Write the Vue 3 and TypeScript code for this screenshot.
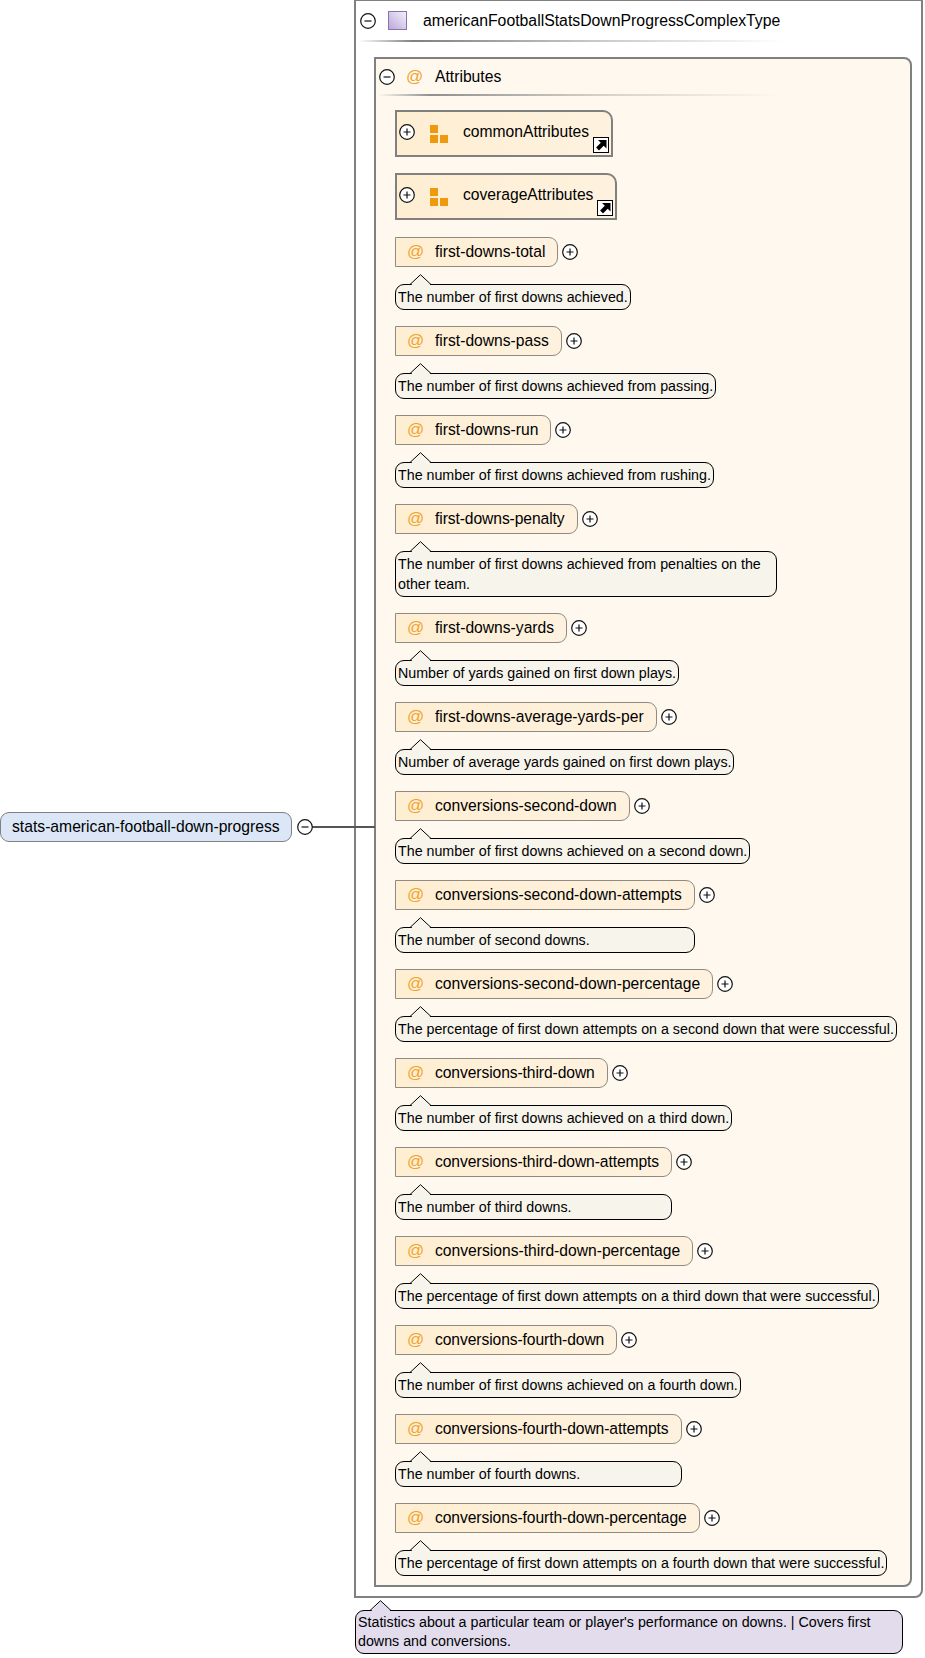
<script setup lang="ts">
interface Attr { name: string; tip: string; wide?: boolean; tight?: boolean }
const attrs: Attr[] = [
  { name: 'first-downs-total', tip: 'The number of first downs achieved.' },
  { name: 'first-downs-pass', tip: 'The number of first downs achieved from passing.' },
  { name: 'first-downs-run', tip: 'The number of first downs achieved from rushing.' },
  { name: 'first-downs-penalty', tip: 'The number of first downs achieved from penalties on the other team.', wide: true, tight: true },
  { name: 'first-downs-yards', tip: 'Number of yards gained on first down plays.' },
  { name: 'first-downs-average-yards-per', tip: 'Number of average yards gained on first down plays.' },
  { name: 'conversions-second-down', tip: 'The number of first downs achieved on a second down.' },
  { name: 'conversions-second-down-attempts', tip: 'The number of second downs.' },
  { name: 'conversions-second-down-percentage', tip: 'The percentage of first down attempts on a second down that were successful.' },
  { name: 'conversions-third-down', tip: 'The number of first downs achieved on a third down.', tight: true },
  { name: 'conversions-third-down-attempts', tip: 'The number of third downs.', tight: true },
  { name: 'conversions-third-down-percentage', tip: 'The percentage of first down attempts on a third down that were successful.' },
  { name: 'conversions-fourth-down', tip: 'The number of first downs achieved on a fourth down.', tight: true },
  { name: 'conversions-fourth-down-attempts', tip: 'The number of fourth downs.', tight: true },
  { name: 'conversions-fourth-down-percentage', tip: 'The percentage of first down attempts on a fourth down that were successful.', tight: true },
]
const groups = ['commonAttributes', 'coverageAttributes']
</script>

<template>
  <div class="root">
    <div class="left">
      <div class="label">stats-american-football-down-progress</div>
      <span class="toggle-wrap">
        <span class="connector"></span>
        <svg class="toggle" viewBox="0 0 16 16"><circle cx="8" cy="8" r="7.3" /><path d="M4.5 8h7" /></svg>
      </span>
    </div>
    <div class="right">
      <div class="outer">
        <div class="head outer-head">
          <svg class="toggle" viewBox="0 0 16 16"><circle cx="8" cy="8" r="7.3" /><path d="M4.5 8h7" /></svg>
          <span class="type-icon"></span>
          <span class="title">americanFootballStatsDownProgressComplexType</span>
        </div>
        <div class="sep outer-sep"></div>
        <div class="inner">
          <div class="head inner-head">
            <svg class="toggle" viewBox="0 0 16 16"><circle cx="8" cy="8" r="7.3" /><path d="M4.5 8h7" /></svg>
            <span class="at">@</span>
            <span class="title">Attributes</span>
          </div>
          <div class="sep inner-sep"></div>
          <div class="group" v-for="g in groups" :key="g">
            <svg class="toggle" viewBox="0 0 16 16"><circle cx="8" cy="8" r="7.3" /><path d="M4.5 8h7M8 4.5v7" /></svg>
            <svg class="group-icon" viewBox="0 0 18 18"><path d="M0 0h8v8H0zM0 10h8v8H0zM10 10h8v8h-8z" fill="#ef9a0c" /></svg>
            <span class="group-name">{{ g }}</span>
            <svg class="link" viewBox="0 0 16 16">
              <rect x=".5" y=".5" width="15" height="15" fill="#fff" stroke="#000" />
              <path d="M5 3h8.500v8.500l-2.800-2.800-4.700 4.700-2.900-2.900 4.700-4.700z" fill="#000" />
            </svg>
          </div>
          <div class="attrs">
            <div class="attr" v-for="a in attrs" :key="a.name">
              <div class="pill-row">
                <div class="pill" :class="{ tight: a.tight }"><span class="at">@</span><span>{{ a.name }}</span></div>
                <svg class="toggle" viewBox="0 0 16 16"><circle cx="8" cy="8" r="7.3" /><path d="M4.500 8h7M8 4.500v7" /></svg>
              </div>
              <div class="tip" :class="{ wide: a.wide }">
                <svg class="notch" viewBox="0 0 22 12"><path class="nf" d="M.5 12 10.500.7 21.500 12z" /><path d="M0 10.500 10.500.7 21 10.500" /></svg>
                {{ a.tip }}
              </div>
            </div>
          </div>
        </div>
      </div>
      <div class="tip desc">
        <svg class="notch" viewBox="0 0 22 12"><path class="nf" d="M.5 12 10.500.7 21.500 12z" /><path d="M0 10.500 10.500.7 21 10.500" /></svg>
        Statistics about a particular team or player's performance on downs. | Covers first downs and conversions.
      </div>
    </div>
  </div>
</template>

<style>
html, body { margin: 0; background: #fff; }
</style>

<style scoped>
.root {
  display: flex;
  align-items: center;
  width: 925px;
  height: 1658px;
  font-family: "Liberation Sans", Arial, sans-serif;
  color: #000;
  font-size: 16px;
  overflow: hidden;
}
.left {
  flex: 0 0 354px;
  display: flex;
  align-items: center;
  gap: 5px;
  padding-left: 0;
  box-sizing: border-box;
  margin-bottom: 4px;
}
.label {
  box-sizing: border-box;
  height: 30px;
  line-height: 28px;
  padding: 0 11px;
  border: 1px solid #808080;
  border-radius: 9px;
  background: #dbe7f7;
  white-space: nowrap;
  font-size: 15.7px;
}
.toggle-wrap { position: relative; display: flex; }
.connector {
  position: absolute;
  left: 14px;
  top: 7px;
  width: 64px;
  height: 2px;
  background: #555;
  z-index: 2;
}
.toggle {
  flex: none;
  width: 16px;
  height: 16px;
  display: block;
  position: relative;
  z-index: 3;
}
.toggle circle { fill: #fff; stroke: #111; stroke-width: 1.2; }
.toggle path { stroke: #111; stroke-width: 1.2; fill: none; }
.right {
  flex: 0 0 569px;
  align-self: flex-start;
  display: flex;
  flex-direction: column;
}
.outer {
  box-sizing: border-box;
  height: 1598px;
  border: 2px solid #808080;
  border-top-width: 1px;
  border-bottom-right-radius: 8px;
  background: #fff;
  padding-left: 18px;
  padding-right: 9px;
}
.head { display: flex; align-items: center; }
.outer-head {
  height: 39px;
  margin-left: -14px;
}
.type-icon {
  box-sizing: border-box;
  width: 19px;
  height: 19px;
  margin-left: 12px;
  border: 1px solid #8a70b4;
  background: linear-gradient(45deg, #bba8da 0%, #f2f0f8 100%);
}
.outer-head .title { margin-left: 16px; font-size: 15.8px; }
.sep {
  height: 2px;
  background: linear-gradient(90deg, #fff 0%, #808080 13%, #c8c8c8 55%, #fff 100%);
}
.outer-sep { width: 426px; margin-left: -16px; margin-top: 0; margin-bottom: 15px; }
.inner {
  box-sizing: border-box;
  height: 1530px;
  border: 2px solid #808080;
  border-top-right-radius: 8px;
  border-bottom-right-radius: 8px;
  background: #fef8ee;
  padding-left: 19px;
}
.inner-head {
  height: 35px;
  margin-left: -16px;
}
.inner-head .title { font-size: 15.7px; }
.at {
  color: #f0a32e;
  font-size: 17px;
}
.inner-head .at { margin-left: 11px; width: 29px; }
.inner-sep {
  width: 400px;
  margin-left: -17px;
  margin-bottom: 14px;
  background: linear-gradient(90deg, #fef8ee 0%, #909090 13%, #d4d0c8 55%, #fef8ee 100%);
}
.group {
  position: relative;
  box-sizing: border-box;
  display: flex;
  align-items: center;
  width: fit-content;
  height: 47px;
  padding: 0 22px 4px 2px;
  margin-bottom: 16px;
  border: 2px solid #808080;
  border-top-right-radius: 10px;
  background: linear-gradient(90deg, #feeed2, #fef2df);
}
.group-icon { width: 18px; height: 18px; margin-left: 15px; margin-top: 4px; flex: none; }
.group-name { margin-left: 15px; font-size: 15.65px; }
.link {
  position: absolute;
  right: 2px;
  bottom: 2px;
  width: 16px;
  height: 16px;
}
.attrs { padding-top: 1px; }
.attr {
  display: flex;
  flex-direction: column;
  align-items: flex-start;
  width: fit-content;
  max-width: 510px;
  padding-bottom: 16px;
}
.pill-row {
  display: flex;
  align-items: center;
  gap: 4px;
  padding-bottom: 17px;
}
.pill-row .toggle { margin-right: -20px; }
.pill {
  box-sizing: border-box;
  display: flex;
  align-items: center;
  height: 30px;
  padding: 0 12px 0 11px;
  border: 1px solid #908a80;
  border-top-right-radius: 9px;
  border-bottom-right-radius: 9px;
  background: linear-gradient(90deg, #feeed2, #fef2df);
  white-space: nowrap;
  font-size: 15.65px;
}
.pill.tight { letter-spacing: -0.09px; }
.pill .at { width: 28px; letter-spacing: 0; }
.tip {
  position: relative;
  box-sizing: border-box;
  min-width: 100%;
  width: fit-content;
  padding: 2px;
  font-size: 14.25px;
  line-height: 20px;
  border: 1px solid #000;
  border-radius: 9px;
  background: #f7f4ec;
}
.tip.wide { width: 382px; min-width: 382px; }
.notch {
  position: absolute;
  left: 14px;
  top: -11px;
  width: 22px;
  height: 12px;
  overflow: visible;
}
.notch path { fill: none; stroke: #000; stroke-width: 1; }
.notch .nf { fill: #f7f4ec; stroke: none; }
.desc {
  width: 548px;
  min-width: 548px;
  margin-top: 12px;
  margin-left: 1px;
  padding-top: 2px;
  padding-bottom: 2px;
  line-height: 19px;
  background: #e2dced;
}
.desc .nf { fill: #e2dced; }
</style>
